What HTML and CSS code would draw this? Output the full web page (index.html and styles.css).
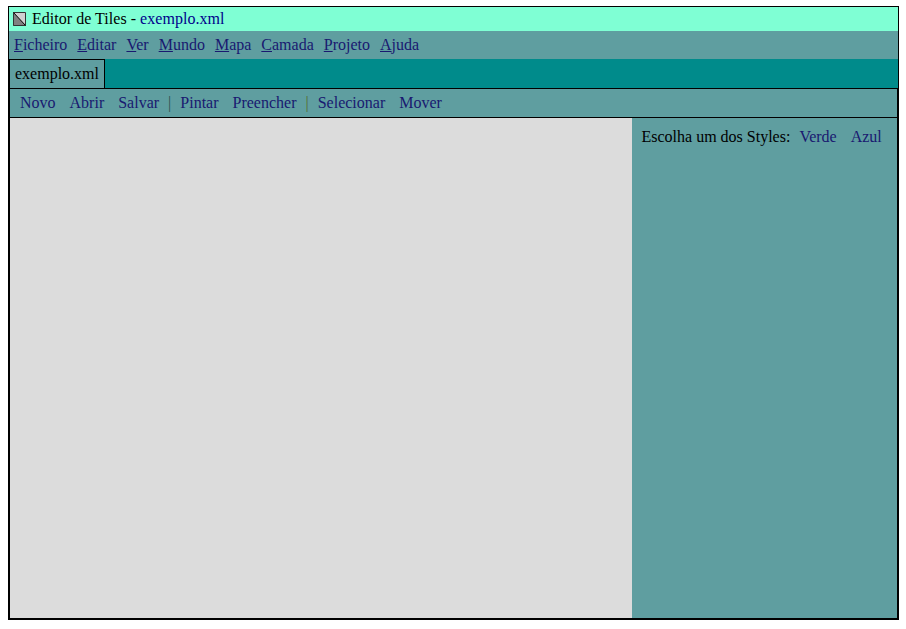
FILE: index.html
```html
<!DOCTYPE html>
<html lang="pt">
<head>
<meta charset="utf-8">
<title>Editor de Tiles</title>
<link rel="stylesheet" href="styles.css">
</head>
<body>
<div class="window">
  <header class="title">
    <svg class="logo" width="13" height="14" viewBox="0 0 13 14"><path fill="#d0d0d0" d="M0 0h13v14H0z"/><path d="M0 0L13 14H0z" fill="#808080"/><path d="M0 0L13 14" stroke="#000" stroke-width="1"/><path d="M.5 .5h12v13H.5z" fill="none" stroke="#333"/></svg>
    <span>Editor de Tiles - <span class="file">exemplo.xml</span></span>
  </header>
  <nav class="menu">
    <a><u>F</u>icheiro</a><a><u>E</u>ditar</a><a><u>V</u>er</a><a><u>M</u>undo</a><a><u>M</u>apa</a><a><u>C</u>amada</a><a><u>P</u>rojeto</a><a><u>A</u>juda</a>
  </nav>
  <div class="tabs"><div class="tab">exemplo.xml</div></div>
  <div class="panel">
    <div class="tools">
      <a>Novo</a><a>Abrir</a><a>Salvar</a><i class="dark">|</i><a>Pintar</a><a>Preencher</a><i>|</i><a>Selecionar</a><a>Mover</a>
    </div>
    <main class="main">
      <section class="canvas"></section>
      <aside class="side">Escolha um dos Styles:<a>Verde</a><a>Azul</a></aside>
    </main>
  </div>
</div>
</body>
</html>
```
FILE: styles.css
```css
* { box-sizing: border-box; }
body { margin: 6px 7px 0 8px; font: 16px/18px "Liberation Serif", serif; color: #000; background: #fff; }
.window { height: 614px; border: 1px solid #000; display: flex; flex-direction: column; }
.title { height: 24px; background: #7fffd4; display: flex; align-items: center; padding-left: 4px; gap: 6px; }
.title span { letter-spacing: 0.03px; }
.file { color: #00008b; }
a { color: #191970; }
.menu { height: 28px; background: #5f9ea0; display: flex; align-items: center; padding-left: 5px; gap: 10px; }
.tabs { height: 29px; background: #008b8b; display: flex; }
.tab { background: #5f9ea0; border: 1px solid #000; border-bottom: 0; padding: 5px 5px; }
.panel { flex: 1; border: 1px solid #000; display: flex; flex-direction: column; }
.tools { height: 29px; background: #5f9ea0; border-bottom: 1px solid #000; display: flex; align-items: center; padding-left: 10px; gap: 14px; }
.tools i { font-style: normal; margin: 0 -5px; color: #556b2f; }
.tools .dark { color: #2f4f4f; }
.main { flex: 1; display: flex; }
.canvas { flex: 1; background: #dcdcdc; }
.side { width: 265px; background: #5f9ea0; padding: 10px 0 0 9.5px; white-space: nowrap; }
.side a { margin-left: 9px; }
.side a + a { margin-left: 14px; }
```
